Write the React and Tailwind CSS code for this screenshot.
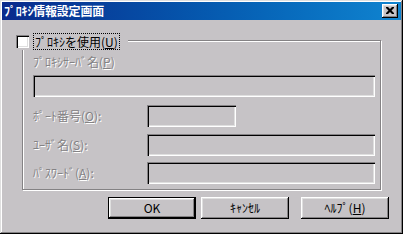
import React from "react";

const raised =
  "shadow-[inset_-1px_-1px_0_#000,inset_1px_1px_0_#fff,inset_-2px_-2px_0_#848284,inset_2px_2px_0_#dfdfdf]";
const sunken =
  "shadow-[inset_1px_1px_0_#848284,inset_2px_2px_0_#000,inset_-1px_-1px_0_#fff,inset_-2px_-2px_0_#dfdfdf]";
const disabledText = "text-[#848284] [text-shadow:1px_1px_0_#fff]";

const Field = ({ label, width }) => (
  <div className="flex items-center">
    <span className={`w-[114px] ${disabledText}`}>{label}</span>
    <div className={`${width} h-[22px] ${sunken}`} />
  </div>
);

const App = () => {
  return (
    <div
      className={`w-[403px] h-[234px] bg-[#c6c3c6] p-[2px] text-[12px] leading-[14px] font-['Noto_Sans_CJK_JP',sans-serif] shadow-[inset_-1px_-1px_0_#000,inset_1px_1px_0_#dfdfdf,inset_-2px_-2px_0_#848284,inset_2px_2px_0_#fff]`}
    >
      {/* Title bar */}
      <div className="h-[18px] flex items-center pl-[2px] pr-[3px] bg-gradient-to-r from-[#0a2a8c] to-[#1084d0]">
        <span className="text-white font-bold tracking-[-0.2px]">ﾌﾟﾛｷｼ情報設定画面</span>
        <div
          className={`ml-auto w-[16px] h-[14px] bg-[#c6c3c6] flex items-center justify-center ${raised}`}
        >
          <svg width="8" height="7" viewBox="0 0 8 7" className="-mt-[1px]">
            <path
              d="M0 0h2l2 2 2-2h2v1L5.5 3.5 8 6v1H6L4 5 2 7H0V6l2.5-2.5L0 1z"
              fill="#000"
            />
          </svg>
        </div>
      </div>

      {/* Group box */}
      <div className="ml-[20px] mt-[20px] relative w-[359px] h-[150px] border border-[#848284] shadow-[inset_1px_1px_0_#fff,1px_1px_0_#fff]">
        <div className="absolute left-[-7px] top-[-8px] h-[17px] flex items-center bg-[#c6c3c6] pr-[8px]">
          <div className={`w-[13px] h-[13px] bg-white ${sunken}`} />
          <span className="ml-[4px] h-[17px] px-[1px] flex items-center border border-dotted border-black text-black">
            ﾌﾟﾛｷｼを使用(<u>U</u>)
          </span>
        </div>

        <div className="pl-[10px] pt-[14px]">
          <div className={disabledText}>
            ﾌﾟﾛｷｼｻｰﾊﾞ名(<u>P</u>)
          </div>
          <div className={`mt-[6px] w-[342px] h-[22px] ${sunken}`} />
          <div className="mt-[8px]">
            <Field
              label={<>ﾎﾟｰﾄ番号(<u>O</u>):</>}
              width="w-[89px]"
            />
          </div>
          <div className="mt-[7px]">
            <Field
              label={<>ﾕｰｻﾞ名(<u>S</u>):</>}
              width="w-[228px]"
            />
          </div>
          <div className="mt-[6px]">
            <Field
              label={<>ﾊﾟｽﾜｰﾄﾞ(<u>A</u>):</>}
              width="w-[228px]"
            />
          </div>
        </div>
      </div>

      {/* Buttons */}
      <div className="mt-[7px] ml-[106px] flex text-black">
        <div className="w-[88px] h-[22px] border border-black">
          <div className={`w-full h-full flex items-center justify-center ${raised}`}>OK</div>
        </div>
        <div
          className={`ml-[5px] w-[88px] h-[22px] flex items-center justify-center ${raised}`}
        >
          ｷｬﾝｾﾙ
        </div>
        <div
          className={`ml-[12px] w-[88px] h-[22px] flex items-center justify-center ${raised}`}
        >
          ﾍﾙﾌﾟ(<u>H</u>)
        </div>
      </div>
    </div>
  );
};

export default App;
